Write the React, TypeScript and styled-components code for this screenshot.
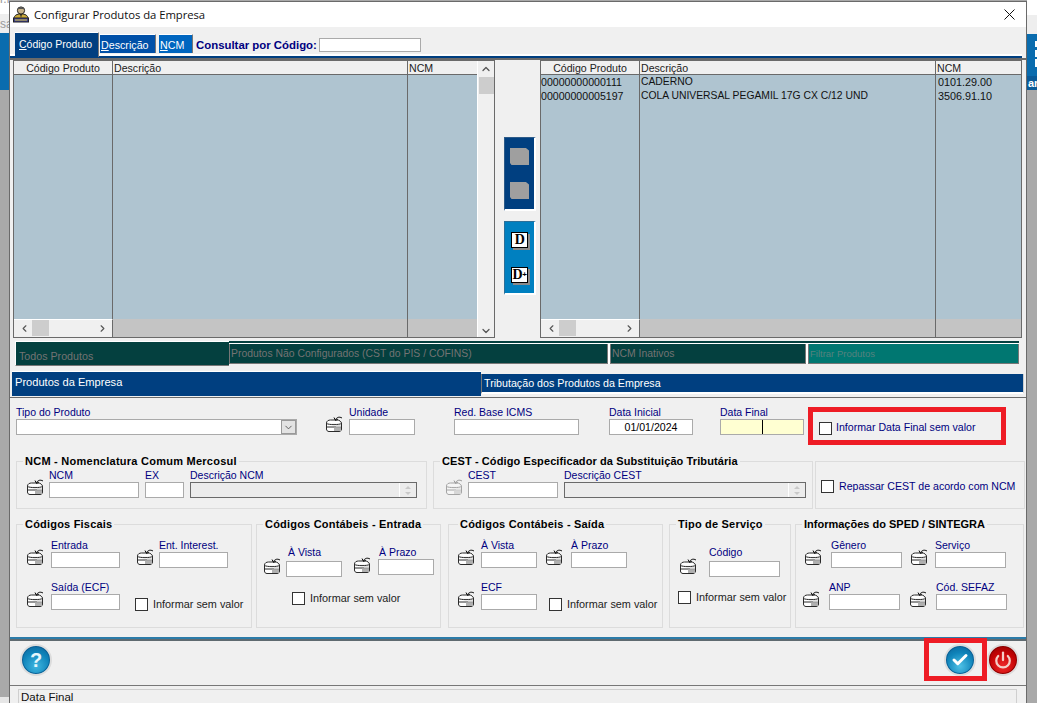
import React from 'react';
import styled, { createGlobalStyle } from 'styled-components';
import { Check, Power, ChevronUp, ChevronDown, ChevronLeft, ChevronRight } from 'lucide-react';

const Global = createGlobalStyle`
  html, body { margin: 0; padding: 0; background: #a9a9a9; }
  body { font-family: "Liberation Sans", Arial, sans-serif; font-size: 11px; color: #000; overflow: hidden; }
  * { box-sizing: border-box; }
`;

const Page = styled.div`
  width: 1037px; height: 703px; overflow: hidden;
  display: grid; grid-template-columns: 9px 1018px 10px;
`;
const Side = styled.div`
  display: flex; flex-direction: column; height: 703px; overflow: hidden;
`;
const Back = styled.div<{ $h: number; $bg: string }>`
  height: ${p => p.$h}px; flex: none; background: ${p => p.$bg}; overflow: hidden;
  color: #9a9a9a; font-size: 12px; line-height: 14px; white-space: nowrap;
`;
const Fragment = styled.div<{ $mt: number }>`margin-top: ${p => p.$mt}px;`;
const BlueEdge = styled.div`
  height: 56px; flex: none; background: #0a6cae; overflow: hidden;
  display: flex; flex-direction: column; align-items: flex-end;
`;
const EdgeBlock = styled.span<{ $mt: number; $h: number }>`
  display: block; width: 2px; height: ${p => p.$h}px; background: #fff; margin-top: ${p => p.$mt}px;
`;
const EdgeText = styled.div`
  width: 10px; margin-top: 9px; padding-left: 1px; color: #fff; font-weight: bold; font-size: 11px; line-height: 14px; background: #0a5a98; flex: 1;
`;
const Win = styled.div`
  margin-top: 1px; height: 702px; border: 1px solid #6a6a6a; border-bottom: 0;
  background: #f0f0f0; display: flex; flex-direction: column; overflow: hidden;
`;
const TitleBar = styled.div`
  height: 25px; flex: none; background: #fff; display: flex; align-items: center; padding: 0 11px 1px 3px;
`;
const TitleText = styled.div`
  margin-left: 5px; flex: 1; font-family: "Open Sans", "Noto Sans", sans-serif; font-size: 11.3px; color: #111; letter-spacing: -0.05px;
`;
const SearchStrip = styled.div`
  height: 33px; flex: none; padding: 5px 0 0 4px; display: flex; align-items: flex-start; position: relative;
  border-bottom: 2px solid #6a6a6a;
  &::after { content: ""; position: absolute; left: 0; right: 4px; bottom: 0; height: 2px; background: #003f80; }
  &::before { content: ""; position: absolute; left: 0; right: 4px; bottom: 2px; height: 2px; background: #fff; }
`;
const SearchTab = styled.div<{ $bg: string; $w: number; $active?: boolean; $ml?: number }>`
  position: relative; z-index: 1;
  width: ${p => p.$w}px; height: ${p => (p.$active ? 25 : 19)}px; margin-top: ${p => (p.$active ? 0 : 2)}px;
  background: ${p => p.$bg}; color: #fff; font-size: ${p => (p.$active ? 10.5 : 10.7)}px; margin-left: ${p => p.$ml ?? 1}px;
  border-right: 1px solid #777; border-top: 1px solid #fff; line-height: ${p => (p.$active ? 22 : 20)}px;
  padding-left: ${p => (p.$active ? 4 : 1)}px; white-space: nowrap; overflow: hidden;
`;
const Under = styled.span`text-decoration: underline;`;
const SearchLabel = styled.div`
  margin-left: 3px; margin-top: 6px; font-weight: bold; color: #000080; font-size: 11.4px; line-height: 14px; white-space: nowrap;
  width: 123px; position: relative; z-index: 1;
`;
const SearchInput = styled.div`
  width: 102px; height: 14px; margin-top: 6px; border: 1px solid #aaa; background: #fff; position: relative; z-index: 1;
`;
const GridsRow = styled.div`
  height: 278px; flex: none; padding-left: 3px; display: flex;
`;
const GridFrame = styled.div`
  width: 482px; height: 278px; border: 1px solid #6a6a6a; background: #c4c4c4; display: flex;
`;
const GridTable = styled.div<{ $c2: number }>`
  flex: 1; min-width: 0; display: grid; grid-template-columns: 99px ${p => p.$c2}px 1fr; grid-template-rows: 14px 244px 18px;
`;
const HeadCell = styled.div<{ $center?: boolean; $last?: boolean }>`
  background: #f0f0f0; border-bottom: 1px solid #6a6a6a; border-right: ${p => (p.$last ? 0 : '1px solid #6a6a6a')};
  line-height: 15px; font-size: 10.6px; text-align: ${p => (p.$center ? 'center' : 'left')}; padding-left: ${p => (p.$center ? 0 : 1)}px;
  color: #222; white-space: nowrap; overflow: hidden;
`;
const BodyCell = styled.div<{ $last?: boolean; $pl?: number; $fs: number }>`
  background: #afc4d0; border-right: ${p => (p.$last ? 0 : '1px solid #6a6a6a')}; padding: 0 0 0 ${p => p.$pl ?? 0}px;
  font-size: ${p => p.$fs}px; line-height: 14px; color: #111; white-space: nowrap; overflow: hidden;
`;
const FootCell = styled.div<{ $last?: boolean }>`
  background: #c4c4c4; border-right: ${p => (p.$last ? 0 : '1px solid #6a6a6a')};
`;
const HScroll = styled.div`
  background: #f0f0f0; border-right: 1px solid #6a6a6a; border-top: 1px solid #fff; display: flex; align-items: center; padding: 0 4px 1px 5px; color: #555;
`;
const HThumb = styled.div`width: 17px; height: 16px; margin-left: 2px; background: #cdcdcd; margin-right: auto;`;
const VScroll = styled.div`
  width: 17px; flex: none; background: #f0f0f0; border-left: 1px solid #fff; display: flex; flex-direction: column; align-items: center; color: #555; padding-top: 2px;
`;
const VThumb = styled.div`width: 15px; height: 17px; background: #cdcdcd; margin-top: 2px; margin-bottom: auto;`;
const CenterCol = styled.div`
  width: 45px; flex: none; display: flex; flex-direction: column; padding: 77px 0 0 9px;
`;
const ActionPanel = styled.div<{ $bg: string; $edge: string; $mt: number }>`
  width: 32px; height: 74px; margin-top: ${p => p.$mt}px; background: ${p => p.$bg};
  border-top: 1px solid ${p => p.$edge}; border-left: 1px solid ${p => p.$edge};
  border-right: 2px solid #fff; border-bottom: 2px solid #fff;
  display: flex; flex-direction: column; align-items: center;
`;
const GreySquare = styled.div<{ $mt: number }>`
  width: 19px; height: 17px; margin-top: ${p => p.$mt}px; background: #9f9f9f;
  clip-path: polygon(0 0, 84% 0, 100% 15%, 100% 100%, 8% 100%, 0 88%);
`;
const DocBtn = styled.div<{ $mt: number }>`
  width: 17px; height: 16px; margin-top: ${p => p.$mt}px; background: #fff; border: 1px solid #000; box-shadow: 2px 2px 0 #8a8a8a;
  font-family: "Liberation Serif", serif; font-weight: bold; font-size: 14px; line-height: 14px; color: #000; text-align: center; white-space: nowrap; letter-spacing: -0.5px;
`;
const Plus = styled.span`font-size: 8px; vertical-align: 2px; font-family: "Liberation Sans", sans-serif;`;
const FilterRow = styled.div`
  height: 32px; flex: none; padding: 3px 0 0 5px; display: flex; align-items: flex-start;
`;
const FilterFirst = styled.div`
  width: 214px; height: 25px; background: #04403f; color: #737373; border-top: 1px solid #fff; border-left: 1px solid #fff; border-bottom: 1px solid #777;
  font-size: 10.7px; padding: 7px 0 0 3px; line-height: 14px; white-space: nowrap;
`;
const FilterRest = styled.div`
  width: 790px; height: 23px; border-top: 2px solid #04403f; background: #fff; display: flex; gap: 2px; padding-top: 1px;
`;
const FilterTab = styled.div<{ $w: number; $teal?: boolean }>`
  width: ${p => p.$w}px; height: 20px; background: ${p => (p.$teal ? '#007771' : '#04403f')}; color: ${p => (p.$teal ? '#55827f' : '#737373')};
  border-left: 1px solid #777; border-right: 1px solid #777; border-bottom: 1px solid #777;
  font-size: ${p => (p.$teal ? 9.5 : 10.4)}px; line-height: 20px; padding-left: 1px; white-space: nowrap;
`;
const MainTabs = styled.div`
  height: 28px; flex: none; padding: 2px 0 0 2px; display: flex; align-items: flex-start; border-bottom: 1px solid #6a6a6a; background: #f0f0f0;
`;
const MainActive = styled.div`
  width: 469px; height: 24px; background: #003f80; color: #fff; font-size: 11.1px; padding: 3px 0 0 3px; line-height: 14px; box-shadow: 0 -1px 0 #fff;
`;
const MainOther = styled.div`
  width: 543px; height: 20px; margin-top: 2px; background: #003f80; color: #fff; border-left: 1px solid #777; border-right: 1px solid #ccc; border-bottom: 2px solid #fff; font-size: 10.7px; line-height: 14px; padding: 2px 0 0 2px;
`;
const FormArea = styled.div`
  height: 239px; flex: none; display: flex; flex-direction: column;
`;
const Row = styled.div<{ $mt?: number; $pl?: number; $h?: number }>`
  display: flex; align-items: flex-start; flex: none;
  margin-top: ${p => p.$mt ?? 0}px; padding-left: ${p => p.$pl ?? 0}px;
  ${p => (p.$h ? `height: ${p.$h}px;` : '')}
`;
const FieldBox = styled.div<{ $w: number; $ml?: number }>`
  width: ${p => p.$w}px; margin-left: ${p => p.$ml ?? 0}px; flex: none; display: flex; flex-direction: column;
`;
const FieldLabel = styled.label<{ $pl?: number; $gap?: number }>`
  display: block; height: 13px; line-height: 13px; font-size: 10.5px; color: #000080; white-space: nowrap;
  padding-left: ${p => p.$pl ?? 0}px; margin-bottom: ${p => p.$gap ?? 0}px;
`;
const TextBox = styled.input<{ $yellow?: boolean; $center?: boolean }>`
  display: block; width: 100%; height: 16px; margin: 0; padding: 0 2px; border: 1px solid #aaa; outline: 0; border-radius: 0;
  font: 10.6px "Liberation Sans", sans-serif; color: #000; text-align: ${p => (p.$center ? 'center' : 'left')};
  background: ${p => (p.$yellow ? 'linear-gradient(#000,#000) center / 1px 14px no-repeat, #ffffd2' : '#fff')};
`;
const ComboBox = styled.div`
  width: 281px; height: 16px; border: 1px solid #aaa; background: #fff; display: flex; justify-content: flex-end;
`;
const ComboArrow = styled.div`
  width: 15px; background: #e3e3e3; border: 1px solid #999; display: flex; align-items: center; justify-content: center; color: #555;
`;
const MemoBox = styled.div`
  height: 16px; width: 100%; border: 1px solid #6a6a6a; background: #ececec; display: flex; justify-content: flex-end;
`;
const MemoSpin = styled.div`
  width: 17px; border-left: 1px solid #fff; display: flex; flex-direction: column; align-items: center; justify-content: center; gap: 3px;
`;
const SpinTri = styled.span<{ $down?: boolean }>`
  width: 0; height: 0; border-left: 3px solid transparent; border-right: 3px solid transparent;
  ${p => (p.$down ? 'border-top: 3px solid #c9c9c9;' : 'border-bottom: 3px solid #c9c9c9;')}
`;
const IconSlot = styled.div<{ $ml?: number; $mt?: number; $mr?: number; $off?: boolean }>`
  width: 17px; height: 17px; flex: none; margin-left: ${p => p.$ml ?? 0}px; margin-top: ${p => p.$mt ?? 9}px; margin-right: ${p => p.$mr ?? 6}px;
  opacity: ${p => (p.$off ? 0.38 : 1)};
  svg { display: block; }
`;
const CheckWrap = styled.div<{ $ml?: number; $mt?: number }>`
  display: flex; align-items: center; gap: 5px; flex: none; margin-left: ${p => p.$ml ?? 0}px; margin-top: ${p => p.$mt ?? 0}px;
`;
const Box = styled.span`
  width: 13px; height: 13px; flex: none; display: block; border: 1px solid #333; background: #fff;
`;
const CheckText = styled.span<{ $navy?: boolean; $lift?: number; $tx?: number }>`
  font-size: ${p => (p.$navy ? 10.6 : 10.85)}px; line-height: 13px; white-space: nowrap; color: ${p => (p.$navy ? '#000080' : '#222')};
  margin-top: ${p => -(p.$lift ?? 0)}px; margin-left: ${p => p.$tx ?? 0}px;
`;
const RedFrame = styled.div`
  width: 198px; height: 38px; margin-left: 4px; margin-top: 1px; border: 5px solid #ee1c25; padding: 10px 0 0 6px;
`;
const Group = styled.fieldset<{ $w: number; $h: number; $ml?: number }>`
  width: ${p => p.$w}px; height: ${p => p.$h}px; margin: 0 0 0 ${p => p.$ml ?? 0}px; padding: 0; border: 1px solid #dcdcdc; min-width: 0; flex: none;
`;
const Legend = styled.legend<{ $ls?: number; $ml?: number }>`
  margin-left: ${p => p.$ml ?? 6}px; padding: 0 2px; height: 13px; line-height: 13px; font-weight: bold; font-size: 11px; color: #000; white-space: nowrap; letter-spacing: ${p => p.$ls ?? 0.2}px;
`;
const PlainBox = styled.div`
  width: 210px; height: 48px; margin: 6px 0 0 2px; border: 1px solid #dcdcdc; padding: 18px 0 0 5px; flex: none;
`;
const Rule = styled.div`
  height: 2px; flex: none; background: #2b7ba8;
`;
const Toolbar = styled.div`
  position: relative; height: 47px; flex: none; border-top: 2px solid #5f6a70; border-bottom: 1px solid #777; padding: 3px 7px 0 10px; display: flex; align-items: flex-start; justify-content: space-between;
`;
const Round = styled.div<{ $a: string; $b: string; $c: string }>`
  width: 32px; height: 32px; border-radius: 50%; border: 2px solid #dcdcdc; flex: none;
  background: radial-gradient(circle at 50% 72%, ${p => p.$a} 0%, ${p => p.$b} 55%, ${p => p.$c} 100%);
  display: flex; align-items: center; justify-content: center; color: #fff; box-shadow: inset 0 0 0 1px ${p => p.$c};
`;
const QMark = styled.span`
  font: bold 20px/1 "Liberation Sans", sans-serif; color: #e6f6fb;
`;
const RightBtns = styled.div`display: flex; gap: 11px;`;
const RedOverlay = styled.div`
  position: absolute; left: 914px; top: -3px; width: 63px; height: 43px; border: 5px solid #ee1c25; pointer-events: none;
`;
const StatusWrap = styled.div`
  flex: 1; padding: 3px 8px 0 8px;
`;
const StatusPanel = styled.div`
  width: 999px; height: 30px; border: 1px solid #cfcfcf; padding-left: 2px; font-size: 11.5px; line-height: 14px; color: #111;
`;

const Lookup = () => (
  <svg width="17" height="17" viewBox="0 0 17 17" fill="none">
    <path d="M.5 8 C.5 6 2.5 5 4.5 5 H11 C13.5 5 15 6.5 15.5 8 V14 C15.5 15.5 14.5 16.5 13 16.5 H3 C1.5 16.5 .5 15.5 .5 14 Z" fill="#fff" stroke="#2a2a2a" />
    <path d="M.5 8.5 C3 10 13 10 15.5 8.5" stroke="#2a2a2a" fill="#eee" />
    <path d="M.5 12 H15.5" stroke="#2a2a2a" />
    <rect x="8" y="12.5" width="7" height="3.5" fill="#b0b0b0" />
    <rect x="10" y="10.5" width="5" height="1.5" fill="#c6c6c6" />
    <path d="M16 3 C13.5 1.5 10.5 2 9.5 5" stroke="#111" />
    <path d="M8 2.5 L9.5 5.5 L12 4" stroke="#111" />
  </svg>
);
const Ico = (p: { ml?: number; mt?: number; mr?: number; off?: boolean }) => (
  <IconSlot $ml={p.ml} $mt={p.mt} $mr={p.mr} $off={p.off}><Lookup /></IconSlot>
);
const Fld = (p: { label: string; w: number; ml?: number; pl?: number; gap?: number }) => (
  <FieldBox $w={p.w} $ml={p.ml}>
    <FieldLabel $pl={p.pl} $gap={p.gap}>{p.label}</FieldLabel>
    <TextBox readOnly />
  </FieldBox>
);
const Chk = (p: { text: string; ml?: number; mt?: number; navy?: boolean; lift?: number; tx?: number }) => (
  <CheckWrap $ml={p.ml} $mt={p.mt}>
    <Box />
    <CheckText $navy={p.navy} $lift={p.lift} $tx={p.tx}>{p.text}</CheckText>
  </CheckWrap>
);
const AppIcon = () => (
  <svg width="16" height="18" viewBox="0 0 16 18">
    <path d="M1 14 C1 10 4 9 8 9 C12 9 15 10 15 14 Z" fill="#c9a93a" stroke="#222" />
    <circle cx="8" cy="5.5" r="3.6" fill="#c8b48a" stroke="#222" />
    <path d="M4.5 4 C5 1.5 11 1.5 11.5 4 Z" fill="#555" />
    <path d="M7 9 L8 13 L9 9 Z" fill="#222" />
    <rect x="0.5" y="13" width="15" height="4" fill="#3a3f9a" stroke="#222" />
    <path d="M2 15 H14" stroke="#e8d23a" />
  </svg>
);
const Close = () => (
  <svg width="11" height="11" viewBox="0 0 11 11"><path d="M.5 .5 L10.5 10.5 M10.5 .5 L.5 10.5" stroke="#111" strokeWidth="1" /></svg>
);

const Grid = (p: { c2: number; rows?: string[][]; scroll?: boolean }) => (
  <GridFrame>
    <GridTable $c2={p.c2}>
      <HeadCell $center>Código Produto</HeadCell>
      <HeadCell>Descrição</HeadCell>
      <HeadCell $last>NCM</HeadCell>
      <BodyCell $fs={10.6}>{p.rows?.map(r => <div key={r[0]}>{r[0]}</div>)}</BodyCell>
      <BodyCell $fs={10.35} $pl={1}>{p.rows?.map(r => <div key={r[0]}>{r[1]}</div>)}</BodyCell>
      <BodyCell $fs={10.8} $last $pl={2}>{p.rows?.map(r => <div key={r[0]}>{r[2]}</div>)}</BodyCell>
      <HScroll>
        <ChevronLeft size={11} strokeWidth={2.5} />
        <HThumb />
        <ChevronRight size={11} strokeWidth={2.5} />
      </HScroll>
      <FootCell />
      <FootCell $last />
    </GridTable>
    {p.scroll && (
      <VScroll>
        <ChevronUp size={12} strokeWidth={2.5} />
        <VThumb />
        <ChevronDown size={12} strokeWidth={2.5} />
      </VScroll>
    )}
  </GridFrame>
);

export default function App() {
  return (
    <Page>
      <Global />
      <Side>
        <Back $h={14} $bg="#fff"><Fragment $mt={-8}>r.h</Fragment></Back>
        <Back $h={19} $bg="#eeeeee"><Fragment $mt={3}>sa</Fragment></Back>
        <Back $h={57} $bg="#0a6cae" />
        <Back $h={607} $bg="#a9a9a9" />
        <Back $h={6} $bg="#e6e6e6" />
      </Side>
      <Win>
        <TitleBar>
          <AppIcon />
          <TitleText>Configurar Produtos da Empresa</TitleText>
          <Close />
        </TitleBar>
        <SearchStrip>
          <SearchTab $active $w={84} $bg="#003f80"><Under>C</Under>ódigo Produto</SearchTab>
          <SearchTab $w={56} $bg="#0050a8"><Under>D</Under>escrição</SearchTab>
          <SearchTab $w={34} $ml={3} $bg="#0066c0"><Under>N</Under>CM</SearchTab>
          <SearchLabel>Consultar por Código:</SearchLabel>
          <SearchInput />
        </SearchStrip>
        <GridsRow>
          <Grid c2={295} scroll />
          <CenterCol>
            <ActionPanel $bg="#003f80" $edge="#2c5a88" $mt={0}>
              <GreySquare $mt={10} />
              <GreySquare $mt={17} />
            </ActionPanel>
            <ActionPanel $bg="#0080c0" $edge="#2c6f98" $mt={10}>
              <DocBtn $mt={10}>D</DocBtn>
              <DocBtn $mt={19}>D<Plus>+</Plus></DocBtn>
            </ActionPanel>
          </CenterCol>
          <Grid c2={296} rows={[
            ['00000000000111', 'CADERNO', '0101.29.00'],
            ['00000000005197', 'COLA UNIVERSAL PEGAMIL 17G CX C/12 UND', '3506.91.10'],
          ]} />
        </GridsRow>
        <FilterRow>
          <FilterFirst>Todos Produtos</FilterFirst>
          <FilterRest>
            <FilterTab $w={379}>Produtos Não Configurados (CST do PIS / COFINS)</FilterTab>
            <FilterTab $w={196}>NCM Inativos</FilterTab>
            <FilterTab $w={211} $teal>Filtrar Produtos</FilterTab>
          </FilterRest>
        </FilterRow>
        <MainTabs>
          <MainActive>Produtos da Empresa</MainActive>
          <MainOther>Tributação dos Produtos da Empresa</MainOther>
        </MainTabs>
        <FormArea>
          <Row $mt={8} $pl={6} $h={49}>
            <FieldBox $w={281}>
              <FieldLabel>Tipo do Produto</FieldLabel>
              <ComboBox><ComboArrow><ChevronDown size={11} /></ComboArrow></ComboBox>
            </FieldBox>
            <Ico ml={29} />
            <Fld label="Unidade" w={66} />
            <Fld label="Red. Base ICMS" w={125} ml={39} />
            <FieldBox $w={84} $ml={30}>
              <FieldLabel>Data Inicial</FieldLabel>
              <TextBox readOnly $center value="01/01/2024" />
            </FieldBox>
            <FieldBox $w={84} $ml={27}>
              <FieldLabel>Data Final</FieldLabel>
              <TextBox readOnly $yellow />
            </FieldBox>
            <RedFrame>
              <Chk text="Informar Data Final sem valor" navy lift={3} tx={-1} />
            </RedFrame>
          </Row>
          <Row $pl={6}>
            <Group $w={411} $h={54}>
              <Legend $ls={0.25}>NCM - Nomenclatura Comum Mercosul</Legend>
              <Row $mt={1} $pl={10}>
                <Ico mr={5} />
                <Fld label="NCM" w={90} />
                <Fld label="EX" w={39} ml={6} />
                <FieldBox $w={227} $ml={6}>
                  <FieldLabel>Descrição NCM</FieldLabel>
                  <MemoBox><MemoSpin><SpinTri /><SpinTri $down /></MemoSpin></MemoBox>
                </FieldBox>
              </Row>
            </Group>
            <Group $w={380} $h={54} $ml={6}>
              <Legend $ls={0.1}>CEST - Código Especificador da Substituição Tributária</Legend>
              <Row $mt={1} $pl={12}>
                <Ico off mr={5} />
                <Fld label="CEST" w={90} />
                <FieldBox $w={242} $ml={6}>
                  <FieldLabel>Descrição CEST</FieldLabel>
                  <MemoBox><MemoSpin><SpinTri /><SpinTri $down /></MemoSpin></MemoBox>
                </FieldBox>
              </Row>
            </Group>
            <PlainBox><Chk text="Repassar CEST de acordo com NCM" navy /></PlainBox>
          </Row>
          <Row $mt={9} $pl={6}>
            <Group $w={236} $h={110}>
              <Legend>Códigos Fiscais</Legend>
              <Row $mt={8} $pl={10}>
                <Ico mr={7} />
                <Fld label="Entrada" w={69} />
                <Ico ml={17} mr={5} />
                <Fld label="Ent. Interest." w={69} />
              </Row>
              <Row $mt={13} $pl={10}>
                <Ico mr={7} />
                <Fld label="Saída (ECF)" w={69} />
                <Chk text="Informar sem valor" ml={15} mt={17} />
              </Row>
            </Group>
            <Group $w={185} $h={110} $ml={4}>
              <Legend>Códigos Contábeis - Entrada</Legend>
              <Row $mt={15} $pl={7}>
                <Ico mt={11} mr={5} />
                <Fld label="À Vista" w={56} pl={2} gap={2} />
                <Ico ml={12} mt={10} mr={7} />
                <Fld label="À Prazo" w={56} pl={1} />
              </Row>
              <Row $mt={15} $pl={35}>
                <Chk text="Informar sem valor" />
              </Row>
            </Group>
            <Group $w={215} $h={110} $ml={7}>
              <Legend $ml={9}>Códigos Contábeis - Saída</Legend>
              <Row $mt={8} $pl={9}>
                <Ico mr={6} />
                <Fld label="À Vista" w={56} />
                <Ico ml={9} mr={8} />
                <Fld label="À Prazo" w={56} />
              </Row>
              <Row $mt={13} $pl={9}>
                <Ico mr={6} />
                <Fld label="ECF" w={56} />
                <Chk text="Informar sem valor" ml={12} mt={17} />
              </Row>
            </Group>
            <Group $w={122} $h={110} $ml={6}>
              <Legend>Tipo de Serviço</Legend>
              <Row $mt={15} $pl={10}>
                <Ico mt={11} mr={12} />
                <Fld label="Código" w={71} gap={2} />
              </Row>
              <Row $mt={14} $pl={8}>
                <Chk text="Informar sem valor" />
              </Row>
            </Group>
            <Group $w={229} $h={110} $ml={4}>
              <Legend $ls={0}>Informações do SPED / SINTEGRA</Legend>
              <Row $mt={8} $pl={9}>
                <Ico mr={9} />
                <Fld label="Gênero" w={71} />
                <Ico ml={9} mr={7} />
                <Fld label="Serviço" w={71} />
              </Row>
              <Row $mt={13} $pl={7}>
                <Ico mr={9} />
                <Fld label="ANP" w={71} />
                <Ico ml={10} mr={9} />
                <Fld label="Cód. SEFAZ" w={71} />
              </Row>
            </Group>
          </Row>
        </FormArea>
        <Rule />
        <Toolbar>
          <Round $a="#3fb6e0" $b="#0f84ba" $c="#0b5f95"><QMark>?</QMark></Round>
          <RightBtns>
            <Round $a="#4fc1e6" $b="#0f84ba" $c="#0b5f95"><Check size={18} strokeWidth={4} color="#fff" /></Round>
            <Round $a="#ee2a2a" $b="#c40404" $c="#8a0000"><Power size={18} strokeWidth={3} color="#f4d0c8" /></Round>
          </RightBtns>
          <RedOverlay />
        </Toolbar>
        <StatusWrap>
          <StatusPanel>Data Final</StatusPanel>
        </StatusWrap>
      </Win>
      <Side>
        <Back $h={15} $bg="#fff" />
        <Back $h={19} $bg="#eeeeee" />
        <BlueEdge>
          <EdgeBlock $mt={7} $h={6} />
          <EdgeBlock $mt={3} $h={8} />
          <EdgeBlock $mt={2} $h={8} />
          <EdgeText>an</EdgeText>
        </BlueEdge>
        <Back $h={613} $bg="#a9a9a9" />
      </Side>
    </Page>
  );
}
